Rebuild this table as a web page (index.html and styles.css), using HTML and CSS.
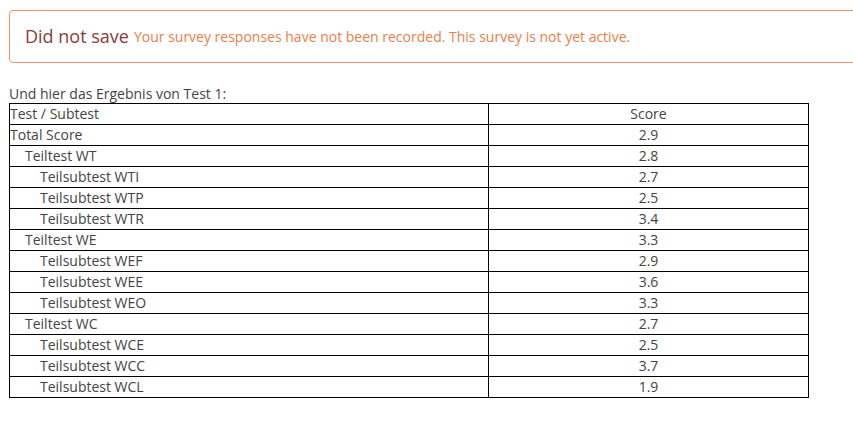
FILE: index.html
```html
<!DOCTYPE html>
<html>
<head>
<meta charset="utf-8">
<link rel="stylesheet" href="styles.css">
</head>
<body>
<div class="page">
  <div class="alert">
    <span class="alert-title">Did not save</span>
    <span class="alert-msg">Your survey responses have not been recorded. This survey is not yet active.</span>
  </div>
  <p class="intro">Und hier das Ergebnis von Test 1:</p>
  <table class="results">
    <colgroup><col class="col-name"><col class="col-score"></colgroup>
    <tr><td class="name">Test / Subtest</td><td class="score">Score</td></tr>
    <tr><td class="name">Total Score</td><td class="score">2.9</td></tr>
    <tr><td class="name l1">Teiltest WT</td><td class="score">2.8</td></tr>
    <tr><td class="name l2">Teilsubtest WTI</td><td class="score">2.7</td></tr>
    <tr><td class="name l2">Teilsubtest WTP</td><td class="score">2.5</td></tr>
    <tr><td class="name l2">Teilsubtest WTR</td><td class="score">3.4</td></tr>
    <tr><td class="name l1">Teiltest WE</td><td class="score">3.3</td></tr>
    <tr><td class="name l2">Teilsubtest WEF</td><td class="score">2.9</td></tr>
    <tr><td class="name l2">Teilsubtest WEE</td><td class="score">3.6</td></tr>
    <tr><td class="name l2">Teilsubtest WEO</td><td class="score">3.3</td></tr>
    <tr><td class="name l1">Teiltest WC</td><td class="score">2.7</td></tr>
    <tr><td class="name l2">Teilsubtest WCE</td><td class="score">2.5</td></tr>
    <tr><td class="name l2">Teilsubtest WCC</td><td class="score">3.7</td></tr>
    <tr><td class="name l2">Teilsubtest WCL</td><td class="score">1.9</td></tr>
  </table>
</div>
</body>
</html>
```
FILE: styles.css
```css
html, body {
  margin: 0;
  padding: 0;
  background: #fff;
  overflow: hidden;
}
body {
  font-family: "Open Sans", "Noto Sans", sans-serif;
  color: #444;
  font-size: 14px;
}
.page {
  padding: 10px 0 0 9px;
}
.alert {
  box-sizing: border-box;
  width: 880px;
  height: 53px;
  border: 1px solid #e8956a;
  border-radius: 4px;
  padding: 0 15px;
  display: flex;
  align-items: center;
  gap: 5px;
  white-space: nowrap;
}
.alert-title {
  font-size: 18px;
  color: #8a3c3c;
  position: relative;
  top: -1px;
}
.alert-msg {
  font-size: 14px;
  color: #e8804a;
}
.intro {
  margin: 21px 0 0 0;
  line-height: 19px;
}
.results {
  border-collapse: collapse;
  table-layout: fixed;
  width: 800px;
}
.col-name { width: 479px; }
.results td {
  border: 1px solid #000;
  padding: 0;
  height: 20px;
  line-height: 20px;
  white-space: nowrap;
}
.results .name.l1 { padding-left: 15px; }
.results .name.l2 { padding-left: 30px; }
.results .score {
  text-align: center;
}
```
